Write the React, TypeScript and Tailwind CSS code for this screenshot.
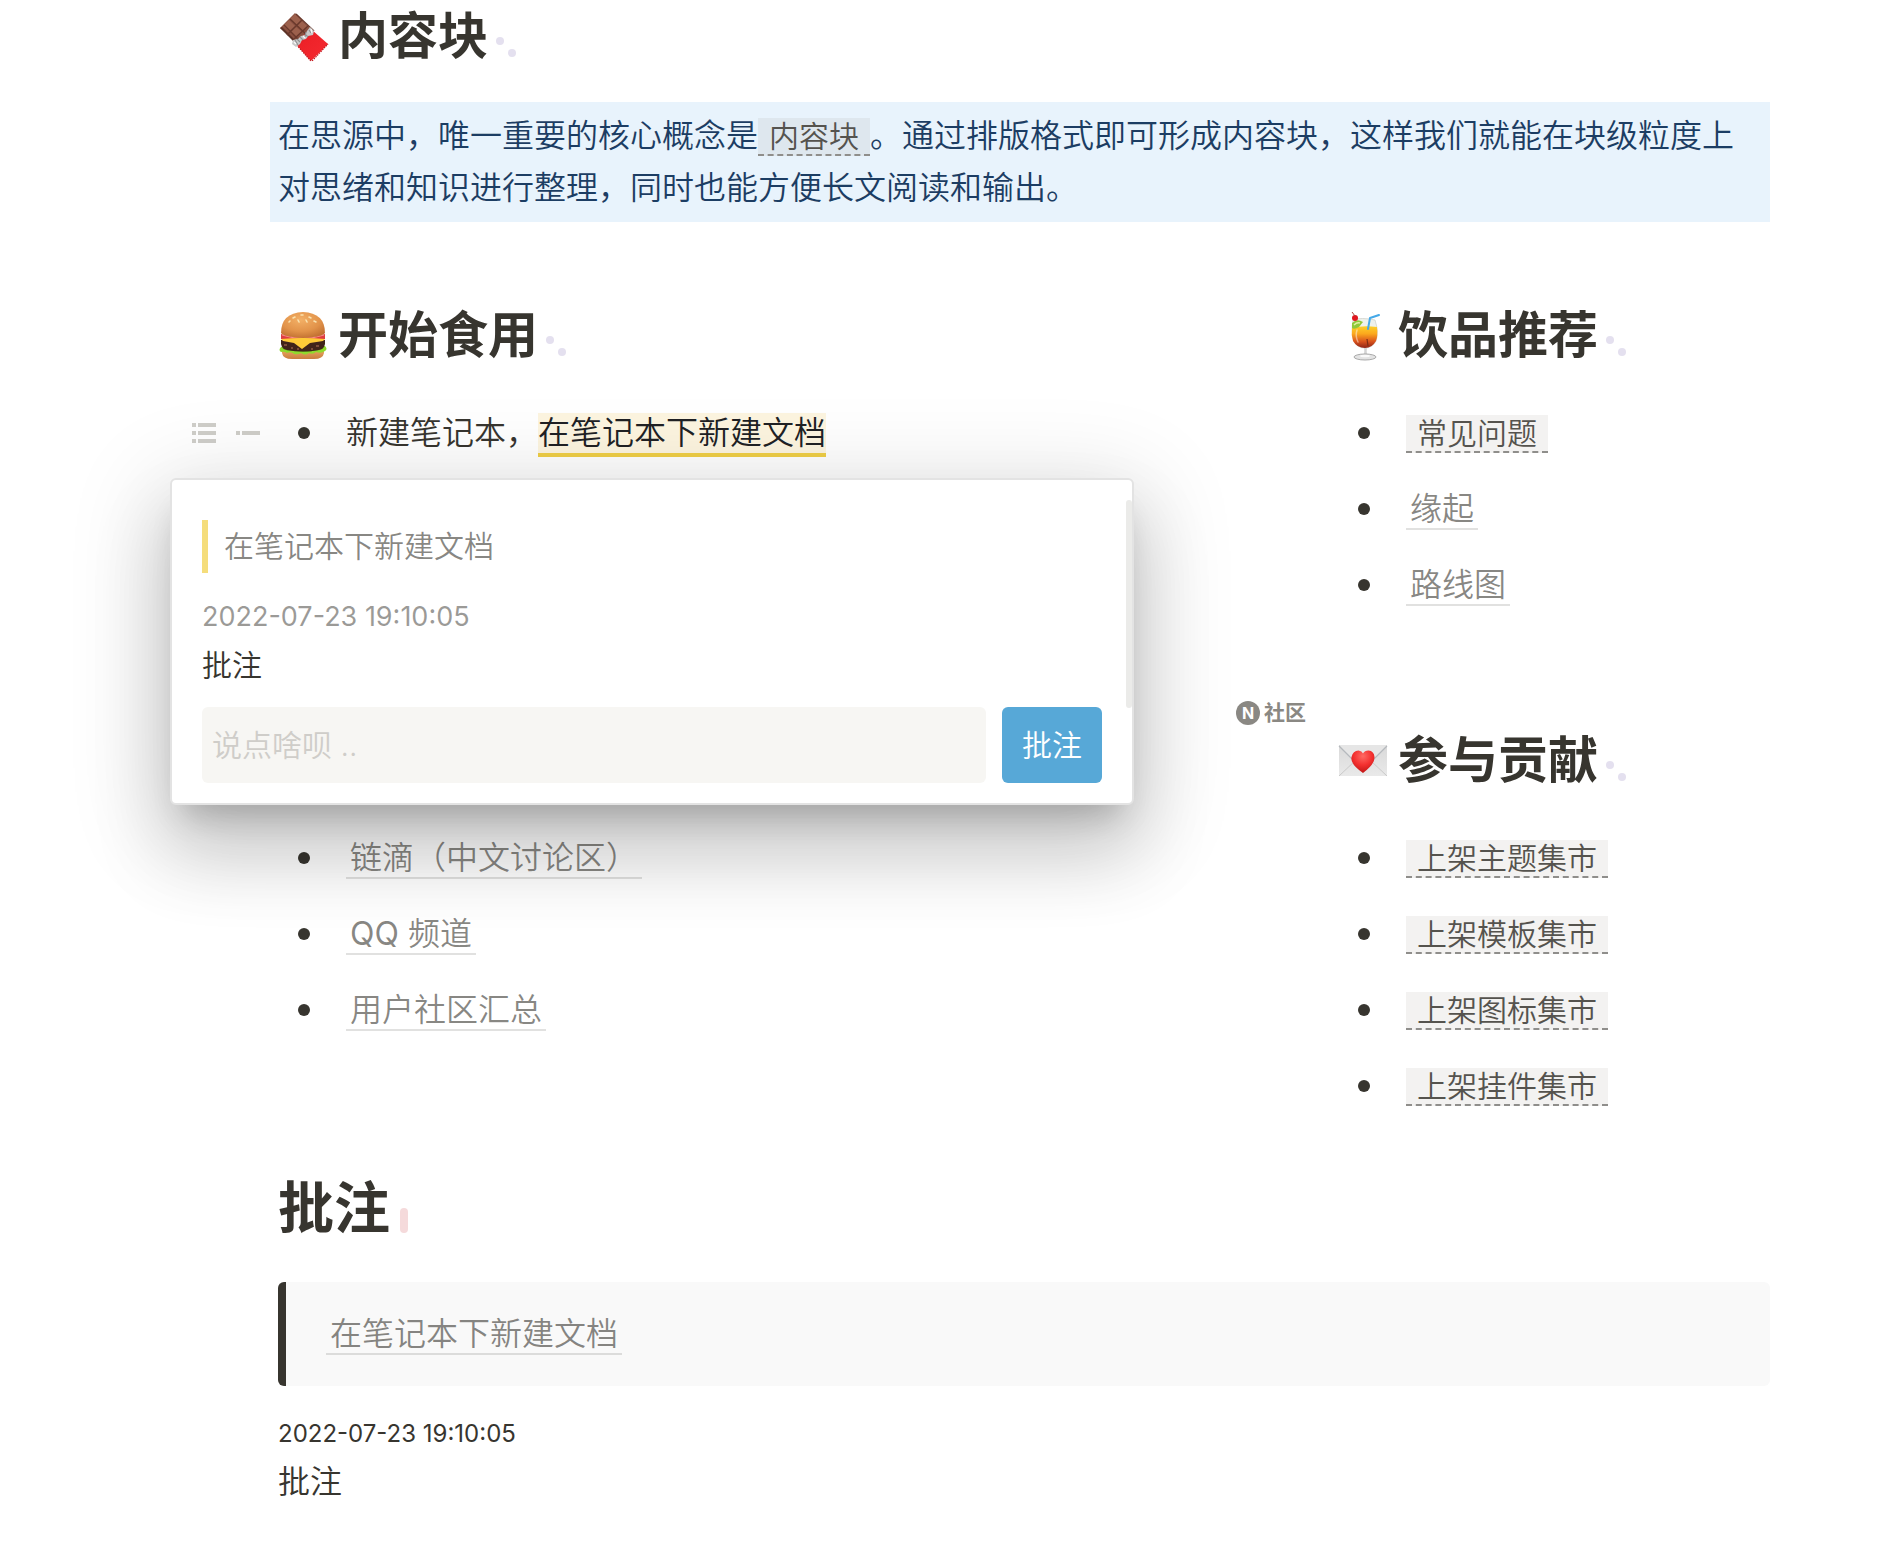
import type { ReactNode } from 'react'

const FAQ = ['常见问题']
const DRINK_LINKS = ['缘起', '路线图']
const BAZAAR_REFS = ['上架主题集市', '上架模板集市', '上架图标集市', '上架挂件集市']

function ChocolateIcon() {
  return (
    <svg viewBox="0 0 56 56" className="size-14 shrink-0" aria-hidden="true">
      <defs>
        <linearGradient id="wrap" x1="0" y1="0" x2="1" y2="1">
          <stop offset="0" stopColor="#c8181f" />
          <stop offset="0.35" stopColor="#ee2229" />
          <stop offset="1" stopColor="#f52a31" />
        </linearGradient>
      </defs>
      <path d="M20 5 L39 24 L25 37 L5 20 Z" fill="#8a5040" />
      <path d="M5 20 L20 35 L20 32 L7 19 Z" fill="#5c3227" />
      <path d="M20 6 L26 12 L21 17 L15 11 Z M27 13 L33 19 L28 23 L22 18 Z M14 12 L20 18 L14 23 L8 18 Z M21 19 L27 24 L21 29 L15 24 Z" fill="#9c604c" />
      <path d="M15 11 L33 28 M21 6 L39 23 M9 17 L24 32 M27 12 L12 27 M33 18 L19 31" stroke="#69382b" strokeWidth="1.4" fill="none" />
      <path d="M30 26 L37 22 L53 36 L37 52 L35 52 L20 35 Z" fill="url(#wrap)" />
      <path d="M20 35 L35 52 L37 53 L53 36" stroke="#c4161c" strokeWidth="1.2" fill="none" strokeDasharray="1.5 1" />
      <path d="M35 19 L39 23 L38 27 L33 28 L31 31 L27 32 L25 36 L21 39 L17 36 L18 32 L23 31 L26 28 L30 27 L32 23 Z" fill="#c9c9c9" />
      <path d="M34 22 L36 25 M30 26 L33 29 M25 29 L28 32 M20 32 L23 37 M31 24 L30 29 M22 31 L25 34" stroke="#8f9092" strokeWidth="1.1" />
      <path d="M36 21 L37 25 M28 28 L30 30 M19 34 L21 36" stroke="#fafafa" strokeWidth="1.2" />
    </svg>
  )
}

function BurgerIcon() {
  return (
    <svg viewBox="0 0 56 56" className="size-14 shrink-0" aria-hidden="true">
      <defs>
        <radialGradient id="bun" cx="0.45" cy="0.3" r="0.8">
          <stop offset="0" stopColor="#f3b066" />
          <stop offset="0.55" stopColor="#e2934a" />
          <stop offset="1" stopColor="#b9672a" />
        </radialGradient>
        <linearGradient id="base" x1="0" y1="0" x2="0" y2="1">
          <stop offset="0" stopColor="#e9a663" />
          <stop offset="1" stopColor="#c97d3d" />
        </linearGradient>
      </defs>
      <path d="M7 43 H49 V46 Q48 52 39 52 H17 Q8 52 7 46 Z" fill="url(#base)" />
      <path d="M6 40 Q3 43 6 45 Q9 44 12 46 Q16 44 19 47 Q23 48 26 46 Q30 49 34 46 Q38 48 41 45 Q46 47 50 44 Q53 42 50 39 Z" fill="#8fd92d" />
      <path d="M8 41 Q14 44 20 43 Q30 46 48 41" stroke="#5ea817" strokeWidth="1.4" fill="none" />
      <path d="M6 33 Q5 42 12 43 Q28 46 44 43 Q51 42 50 33 Z" fill="#41241a" />
      <path d="M9 38 H12 M16 41 H18 M41 39 H44 M36 42 H38 M22 42 H24" stroke="#7c4c38" strokeWidth="2" />
      <path d="M6 27 Q28 34 50 27 V32 Q28 36 6 32 Z" fill="#df3d40" />
      <path d="M7 28 Q28 35 49 28" stroke="#f58b86" strokeWidth="1.2" fill="none" />
      <path d="M6 32 Q28 30 50 32 L48 34 L35 36 L27 42 L19 36 L8 34 Z" fill="#ffcb38" />
      <path d="M6 26 Q6 6 28 5 Q50 6 50 26 Q47 30 28 31 Q9 30 6 26 Z" fill="url(#bun)" />
      <path d="M18 11 L20 10 M26 8 L28 8 M34 10 L36 11 M14 15 L15 14 M23 13 L24 15 M31 13 L32 15 M39 14 L41 15" stroke="#fae2ae" strokeWidth="1.6" strokeLinecap="round" />
    </svg>
  )
}

function DrinkIcon() {
  return (
    <svg viewBox="0 0 56 56" className="size-14 shrink-0" aria-hidden="true">
      <defs>
        <linearGradient id="juice" x1="0" y1="0" x2="0" y2="1">
          <stop offset="0" stopColor="#fdd02a" />
          <stop offset="0.35" stopColor="#fba81d" />
          <stop offset="0.7" stopColor="#d9531d" />
          <stop offset="1" stopColor="#8f2316" />
        </linearGradient>
      </defs>
      <path d="M18 13 Q26 10 40 13 Q44 25 41 34 Q37 41 30 41 Q22 41 19 34 Q16 25 18 13 Z" fill="#eef1ec" stroke="#cfd2cc" strokeWidth="0.8" />
      <path d="M17 21 Q28 18 42 20 Q43 29 41 34 Q37 41 30 41 Q22 41 18 34 Q16 28 17 21 Z" fill="url(#juice)" />
      <path d="M22 23 Q20 29 23 35" stroke="#fff" strokeOpacity="0.45" strokeWidth="1.5" fill="none" strokeLinecap="round" />
      <path d="M32 32 L33 39" stroke="#7d2d14" strokeWidth="1.2" />
      <path d="M33 22 L35 11 L44 8" stroke="#45a9e8" strokeWidth="2" fill="none" strokeLinecap="round" strokeLinejoin="round" />
      <path d="M17 16 Q22 11 28 15 L24 20 Q19 23 17 21 Z" fill="#8fc83a" />
      <path d="M19 18 Q22 15 25 16" stroke="#dff0a3" strokeWidth="1.5" fill="none" />
      <circle cx="20" cy="11" r="3" fill="#e0161e" />
      <path d="M20 9 L17 5" stroke="#a5493d" strokeWidth="1" />
      <path d="M29 41 Q30 46 28 48 H33 Q31 46 32 41 Z" fill="#d4d4d4" />
      <ellipse cx="30" cy="50" rx="11" ry="3" fill="#e3e3e3" stroke="#a9a9a9" strokeWidth="1" />
      <ellipse cx="30" cy="49" rx="5" ry="1.2" fill="#fafafa" />
    </svg>
  )
}

function LetterIcon() {
  return (
    <svg viewBox="0 0 56 56" className="size-14 shrink-0" aria-hidden="true">
      <defs>
        <linearGradient id="paper" x1="0" y1="0" x2="0" y2="1">
          <stop offset="0" stopColor="#d9d9d9" />
          <stop offset="1" stopColor="#e9e9e9" />
        </linearGradient>
        <radialGradient id="heart" cx="0.5" cy="0.25" r="0.8">
          <stop offset="0" stopColor="#ff6a63" />
          <stop offset="0.5" stopColor="#f3302f" />
          <stop offset="1" stopColor="#b81212" />
        </radialGradient>
      </defs>
      <rect x="4" y="13" width="48" height="31" fill="url(#paper)" />
      <path d="M4 44 L21 28 M52 44 L35 28" stroke="#c9c9c9" strokeWidth="1" />
      <path d="M4 13 H52 L32 33 Q28 36 24 33 Z" fill="#e6e6e6" />
      <path d="M4 14 L24 34 M52 14 L32 34" stroke="#b5b9bd" strokeWidth="1.2" />
      <path d="M28 41 Q15 32 16.500 25 Q18 18.500 23.500 18.500 Q27 19 28 21.500 Q29.500 18.500 33.500 18.500 Q39 19 39.500 25 Q40 32 28 41 Z" fill="url(#heart)" />
    </svg>
  )
}

function HeadingDots() {
  return (
    <svg viewBox="0 0 20 20" className="mt-[22px] ml-2 size-5 shrink-0 fill-[#e4e0ef]" aria-hidden="true">
      <circle cx="4" cy="4" r="4" />
      <circle cx="16" cy="16" r="4" />
    </svg>
  )
}

function Heading({ icon, children }: { icon: ReactNode; children: ReactNode }) {
  return (
    <h3 className="flex h-16 items-center text-[50px] leading-[64px] font-semibold">
      <span className="-ml-[3px] flex w-[63px] shrink-0">{icon}</span>
      {children}
      <HeadingDots />
    </h3>
  )
}

function Item({ children }: { children: ReactNode }) {
  return (
    <li className="relative flex items-center pl-5">
      <span className="mr-9 size-3 shrink-0 rounded-full bg-[#37352f]" />
      <div>{children}</div>
    </li>
  )
}

function DocLink({ children }: { children: ReactNode }) {
  return (
    <a href="#" className="border-b-2 border-[#37352f]/15 px-1 text-[#37352f]/60">
      {children}
    </a>
  )
}

function BlockRef({ children }: { children: ReactNode }) {
  return (
    <a href="#" className="border-b-2 border-dashed border-[#8f8e8b] bg-[#878378]/10 px-[11px] text-[30px] text-[#55534e]">
      {children}
    </a>
  )
}

function Gutter() {
  return (
    <div className="absolute top-4 right-full mr-[18px] flex gap-5 text-[#cfcec9]">
      <button type="button" aria-label="列表" className="size-6">
        <svg viewBox="0 0 24 24" fill="currentColor">
          <path d="M0 0h4v4H0zM6 0h18v4H6zM0 8h4v4H0zM6 8h18v4H6zM0 16h4v4H0zM6 16h18v4H6z" />
        </svg>
      </button>
      <button type="button" aria-label="列表项" className="size-6">
        <svg viewBox="0 0 24 24" fill="currentColor">
          <path d="M0 8h4v4H0zM6 8h18v4H6z" />
        </svg>
      </button>
    </div>
  )
}

function MemoPopup() {
  return (
    <div className="absolute top-[71px] -left-[108px] z-10 w-[964px] rounded-md border-2 border-[#e3e3e3] bg-white px-[30px] pt-10 pb-5 text-[30px] leading-[48px] shadow-[0_22px_30px_-14px_rgba(0,0,0,0.2),0_48px_76px_6px_rgba(0,0,0,0.14),0_18px_92px_16px_rgba(0,0,0,0.12)]">
      <blockquote className="border-l-6 border-[#f5dd7b] pl-4 leading-[53px] text-[#37352f]/60">
        在笔记本下新建文档
      </blockquote>
      <div className="mt-5 text-[27px] font-normal text-[#37352f]/50">2022-07-23 19:10:05</div>
      <div>批注</div>
      <form className="mt-[18px] flex gap-4" onSubmit={(e) => e.preventDefault()}>
        <input
          type="text"
          aria-label="批注内容"
          placeholder="说点啥呗 .."
          className="h-[76px] min-w-0 flex-1 rounded-md bg-[#f7f6f3] px-[10px] outline-none placeholder:text-[#cfcdc9]"
        />
        <button type="submit" className="h-[76px] w-[100px] rounded-md bg-[#57a8d7] text-white">
          批注
        </button>
      </form>
      <div className="absolute top-5 right-0 h-[208px] w-1.5 rounded-full bg-[#ebebe9]" />
    </div>
  )
}

export default function App() {
  return (
    <main className="min-h-screen overflow-x-hidden bg-white pt-1 pr-[118px] pb-10 pl-[270px] font-['Inter','Noto_Sans_CJK_SC',sans-serif] text-[32px] leading-[52px] font-[350] text-[#37352f]">
      <div className="pl-2">
        <Heading icon={<ChocolateIcon />}>内容块</Heading>
      </div>

      <p className="mt-[34px] bg-[#e8f3fc] p-2 text-[#1c3d63]">
        在思源中，唯一重要的核心概念是<BlockRef>内容块</BlockRef>
        。通过排版格式即可形成内容块，这样我们就能在块级粒度上对思绪和知识进行整理，同时也能方便长文阅读和输出。
      </p>

      <div className="mt-[81px] grid grid-cols-[1fr_432px] gap-y-[117px] pl-2">
        <section>
          <Heading icon={<BurgerIcon />}>开始食用</Heading>
          <ul className="mt-10">
            <li className="relative flex items-center pl-5">
              <Gutter />
              <span className="mr-9 size-3 shrink-0 rounded-full bg-[#37352f]" />
              <div>
                新建笔记本，
                <mark className="border-b-4 border-[#f0cf47] bg-[#fdf5e0] pb-px text-[#202124]">在笔记本下新建文档</mark>
              </div>
              <MemoPopup />
            </li>
          </ul>
        </section>

        <section>
          <Heading icon={<DrinkIcon />}>饮品推荐</Heading>
          <ul className="mt-10 space-y-6">
            {FAQ.map((text) => (
              <Item key={text}>
                <BlockRef>{text}</BlockRef>
              </Item>
            ))}
            {DRINK_LINKS.map((text) => (
              <Item key={text}>
                <DocLink>{text}</DocLink>
              </Item>
            ))}
          </ul>
        </section>

        <section className="pt-[104px]">
          <ul className="space-y-6">
            <Item>
              <DocLink>链滴（中文讨论区）</DocLink>
            </Item>
            <Item>
              <DocLink>
                <span className="font-normal">QQ</span> 频道
              </DocLink>
            </Item>
            <Item>
              <DocLink>用户社区汇总</DocLink>
            </Item>
          </ul>
        </section>

        <section className="relative">
          <div className="absolute -top-[27px] right-full mr-8 flex items-center gap-1 text-[21px] leading-6 font-semibold whitespace-nowrap text-[#8a8883]">
            <span className="flex size-6 items-center justify-center rounded-full bg-[#8a8883] text-[16px] font-bold text-white">
              N
            </span>
            社区
          </div>
          <Heading icon={<LetterIcon />}>参与贡献</Heading>
          <ul className="mt-10 space-y-6">
            {BAZAAR_REFS.map((text) => (
              <Item key={text}>
                <BlockRef>{text}</BlockRef>
              </Item>
            ))}
          </ul>
        </section>
      </div>

      <div className="pl-2">
        <h2 className="mt-[60px] flex items-center text-[56px] leading-[72px] font-semibold">
          批注
          <span className="mt-6 ml-[10px] h-[25px] w-2 rounded-full bg-[#f5dadb]" />
        </h2>
        <blockquote className="mt-[38px] rounded-md border-l-8 border-[#37352f] bg-[#f9f9f9] py-[26px] pl-10">
          <DocLink>在笔记本下新建文档</DocLink>
        </blockquote>
        <div className="mt-6 text-[24px] leading-[48px] font-normal">2022-07-23 19:10:05</div>
        <div className="leading-[48px]">批注</div>
      </div>
    </main>
  )
}
